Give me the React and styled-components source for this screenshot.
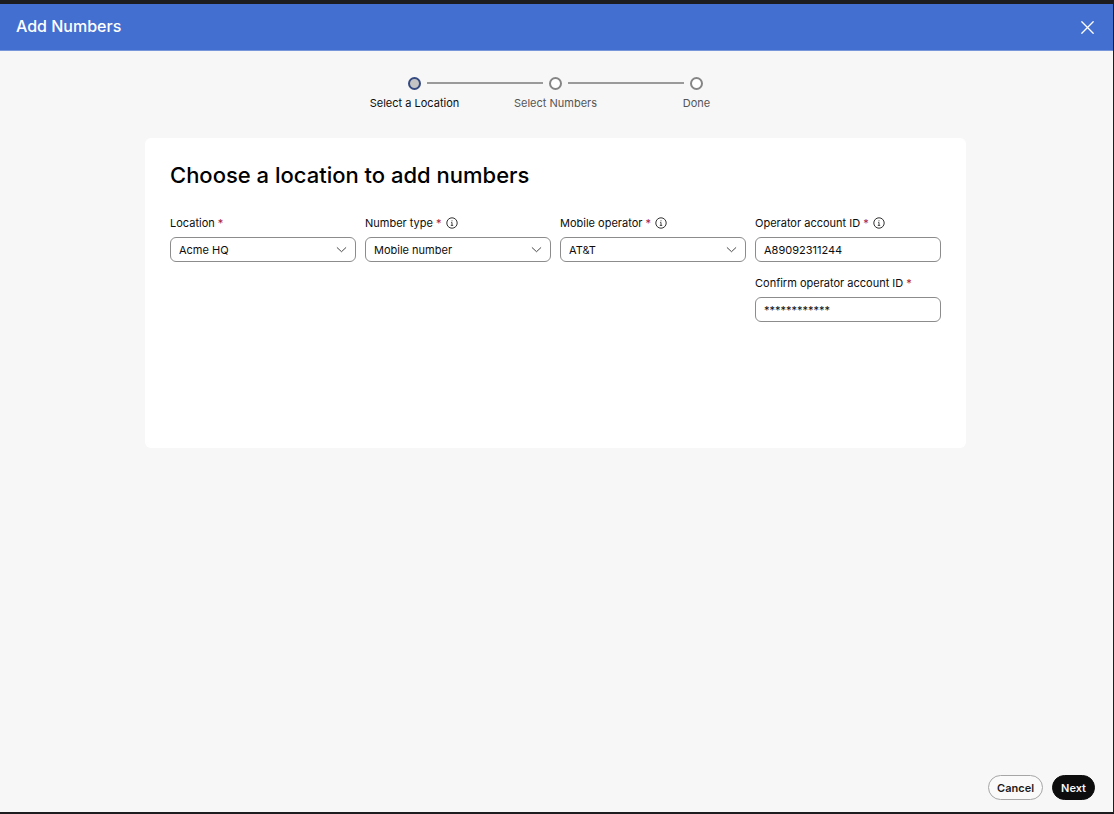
import { useState } from 'react';
import styled, { createGlobalStyle } from 'styled-components';

const GlobalStyle = createGlobalStyle`
  * {
    box-sizing: border-box;
  }

  body {
    margin: 0;
    background: #1d1d1f;
    color: #0d0d0d;
    font-family: Inter, 'Liberation Sans', sans-serif;
    font-size: 11px;
  }

  button,
  input,
  select {
    font: inherit;
    color: inherit;
  }
`;

const Window = styled.div`
  display: flex;
  flex-direction: column;
  min-height: 100vh;
  border: solid #1d1d1f;
  border-width: 4px 1px 2px 0;
  background: #f7f7f7;
`;

const Header = styled.header`
  display: flex;
  align-items: center;
  justify-content: space-between;
  height: 47px;
  padding: 0 18px 0 16px;
  background: #436fd1;
  border-bottom: 1px solid #7896da;
  color: #ffffff;
`;

const HeaderTitle = styled.h1`
  margin: 0;
  padding-bottom: 2px;
  font-size: 16px;
  font-weight: 500;
  line-height: 20px;
`;

const CloseButton = styled.button`
  display: flex;
  padding: 0;
  border: 0;
  background: none;
  cursor: pointer;
`;

const Main = styled.main`
  flex: 1;
  padding: 24px 147px 0 145px;
`;

const Steps = styled.ol`
  display: flex;
  justify-content: center;
  margin: 0;
  padding: 0;
  list-style: none;
`;

const Step = styled.li`
  display: flex;
  flex-direction: column;
  align-items: center;
  width: 141px;
  color: ${({ $active }) => ($active ? '#0d0d0d' : '#555555')};
`;

const Track = styled.div`
  display: flex;
  align-items: center;
  gap: 6px;
  width: 100%;
  height: 16px;
`;

const Line = styled.span`
  flex: 1;
  height: 2px;
  background: ${({ $hidden }) => ($hidden ? 'transparent' : '#9a9a9a')};
`;

const Dot = styled.span`
  width: 13px;
  height: 13px;
  border: 2px solid ${({ $active }) => ($active ? '#354a80' : '#858585')};
  border-radius: 50%;
  background: ${({ $active }) => ($active ? '#c4c4c4' : '#ffffff')};
`;

const StepLabel = styled.span`
  margin-top: 4px;
  line-height: 16px;
`;

const Card = styled.section`
  min-height: 310px;
  margin-top: 27px;
  padding: 22px 25px;
  border-radius: 6px;
  background: #ffffff;
`;

const CardTitle = styled.h2`
  margin: 0 0 24px;
  color: #000000;
  font-size: 22px;
  font-weight: 500;
  line-height: 30px;
`;

const Fields = styled.div`
  display: grid;
  grid-template-columns: repeat(4, 1fr);
  align-items: start;
  gap: 9px;
`;

const Column = styled.div`
  display: flex;
  flex-direction: column;
  gap: 12px;
`;

const FieldHead = styled.div`
  display: flex;
  align-items: center;
  gap: 4px;
  height: 18px;
  margin-bottom: 5px;
`;

const Required = styled.span`
  color: #a8203a;
`;

const InfoButton = styled.button`
  display: flex;
  padding: 0;
  border: 0;
  background: none;
`;

const Input = styled.input`
  display: block;
  width: 100%;
  height: 25px;
  padding: 0 8px;
  border: 1px solid #8c8c8c;
  border-radius: 6px;
  background: #ffffff;
`;

const Select = styled.select`
  display: block;
  width: 100%;
  height: 25px;
  padding: 0 28px 0 8px;
  border: 1px solid #8c8c8c;
  border-radius: 6px;
  background: #ffffff;
  appearance: none;
`;

const SelectWrap = styled.div`
  position: relative;

  svg {
    position: absolute;
    top: 8px;
    right: 9px;
    pointer-events: none;
  }
`;

const Footer = styled.footer`
  display: flex;
  justify-content: flex-end;
  gap: 9px;
  padding: 0 18px 12px;
`;

const Button = styled.button`
  height: 25px;
  padding: 0 8px;
  border: 1px solid ${({ $primary }) => ($primary ? '#0d0d0d' : '#a6a6a6')};
  border-radius: 13px;
  background: ${({ $primary }) => ($primary ? '#0d0d0d' : '#fafafa')};
  color: ${({ $primary }) => ($primary ? '#f7f7f7' : '#1a1a1a')};
  font-weight: 600;
  cursor: pointer;
`;

function CloseIcon() {
  return (
    <svg width="15" height="15" viewBox="0 0 15 15" fill="none" stroke="#ffffff" strokeWidth="1.3" strokeLinecap="round">
      <path d="M1.8 1.8l11.4 11.4M13.2 1.8L1.8 13.2" />
    </svg>
  );
}

function ChevronIcon() {
  return (
    <svg width="11" height="9" viewBox="0 0 11 9" fill="none" stroke="#333333" strokeWidth="0.9" strokeLinecap="round" strokeLinejoin="round">
      <path d="M1.2 2.7l4.3 4 4.3-4" />
    </svg>
  );
}

function InfoIcon() {
  return (
    <svg width="12" height="12" viewBox="0 0 12 12" fill="none" stroke="#1a1a1a">
      <circle cx="6" cy="6" r="5.2" strokeWidth="0.9" />
      <path d="M5.2 5.4H6v3M4.8 8.4h2.4" strokeWidth="0.8" />
      <circle cx="6" cy="3.7" r="0.5" fill="#1a1a1a" stroke="none" />
    </svg>
  );
}

function Field({ id, label, info, children }) {
  return (
    <div>
      <FieldHead>
        <label htmlFor={id}>
          {label} <Required>*</Required>
        </label>
        {info && (
          <InfoButton type="button" aria-label={`About ${label}`}>
            <InfoIcon />
          </InfoButton>
        )}
      </FieldHead>
      {children}
    </div>
  );
}

function SelectField({ id, label, info, options }) {
  return (
    <Field id={id} label={label} info={info}>
      <SelectWrap>
        <Select id={id}>
          {options.map((option) => (
            <option key={option}>{option}</option>
          ))}
        </Select>
        <ChevronIcon />
      </SelectWrap>
    </Field>
  );
}

const steps = ['Select a Location', 'Select Numbers', 'Done'];

export default function App() {
  const [accountId, setAccountId] = useState('A89092311244');
  const [confirmId, setConfirmId] = useState('************');

  return (
    <>
      <GlobalStyle />
      <Window>
        <Header>
          <HeaderTitle>Add Numbers</HeaderTitle>
          <CloseButton type="button" aria-label="Close">
            <CloseIcon />
          </CloseButton>
        </Header>
        <Main>
          <Steps>
            {steps.map((step, index) => (
              <Step key={step} $active={index === 0}>
                <Track>
                  <Line $hidden={index === 0} />
                  <Dot $active={index === 0} />
                  <Line $hidden={index === steps.length - 1} />
                </Track>
                <StepLabel>{step}</StepLabel>
              </Step>
            ))}
          </Steps>
          <Card>
            <CardTitle>Choose a location to add numbers</CardTitle>
            <Fields>
              <SelectField id="location" label="Location" options={['Acme HQ']} />
              <SelectField id="number-type" label="Number type" info options={['Mobile number']} />
              <SelectField id="operator" label="Mobile operator" info options={['AT&T']} />
              <Column>
                <Field id="account-id" label="Operator account ID" info>
                  <Input id="account-id" value={accountId} onChange={(e) => setAccountId(e.target.value)} />
                </Field>
                <Field id="confirm-id" label="Confirm operator account ID">
                  <Input id="confirm-id" value={confirmId} onChange={(e) => setConfirmId(e.target.value)} />
                </Field>
              </Column>
            </Fields>
          </Card>
        </Main>
        <Footer>
          <Button type="button">Cancel</Button>
          <Button type="button" $primary>
            Next
          </Button>
        </Footer>
      </Window>
    </>
  );
}
